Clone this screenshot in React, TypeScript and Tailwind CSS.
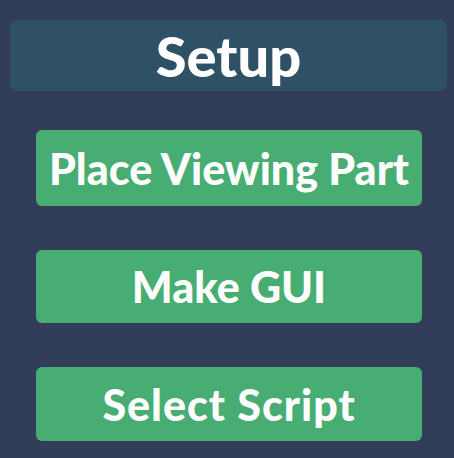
export default function App() {
  const btn =
    "flex items-center justify-center w-[386px] rounded-[6px] bg-[#48ad72] text-white font-black text-[43px] leading-none";
  return (
    <div
      className="w-[454px] h-[458px] bg-[#323d59] pt-[20px] pl-[10px] flex flex-col"
      style={{ fontFamily: "Lato, 'Open Sans', sans-serif" }}
    >
      <div className="w-[437px] h-[71px] rounded-[7px] bg-[#2e5166] flex items-center justify-center text-white font-black text-[56px] leading-none">
        Setup
      </div>
      <div className="ml-[26px] mt-[39px] flex flex-col gap-[44px]">
        <div className={`${btn} h-[76px]`}>Place Viewing Part</div>
        <div className={`${btn} h-[73px]`}>Make GUI</div>
        <div className={`${btn} h-[74px] tracking-[1px]`}>Select Script</div>
      </div>
    </div>
  );
}
